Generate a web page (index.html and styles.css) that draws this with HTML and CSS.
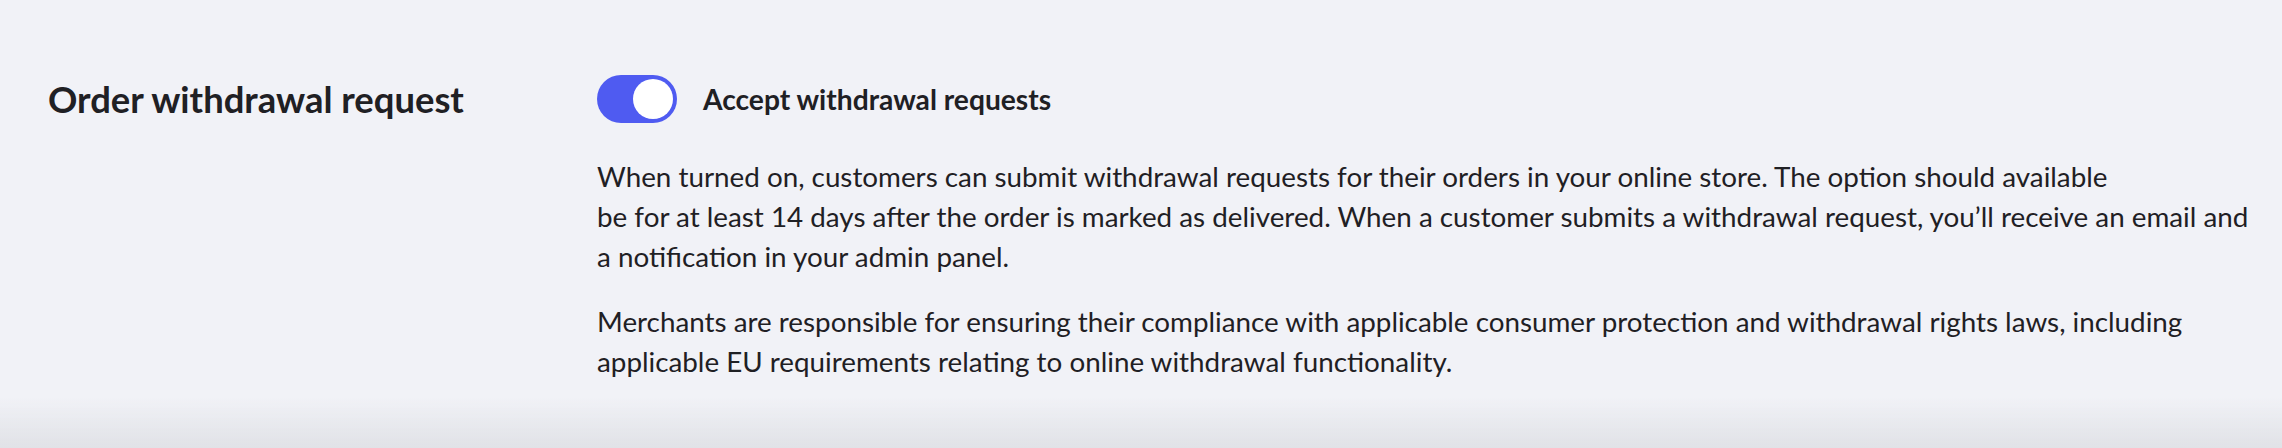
FILE: index.html
```html
<!DOCTYPE html>
<html lang="en">
<head>
    <meta charset="UTF-8">
    <meta name="viewport" content="width=device-width, initial-scale=1.0">
    <title>Order withdrawal request</title>
    <link rel="stylesheet" href="styles.css">
</head>
<body>
    <section class="setting">
        <h2 class="setting-title">Order withdrawal request</h2>
        <div class="setting-body">
            <label class="switch-row">
                <span class="switch is-on"><span class="switch-knob"></span></span>
                <span class="switch-label">Accept withdrawal requests</span>
            </label>
            <p>When turned on, customers can submit withdrawal requests for their orders in your online store. The option should available<br>be for at least 14 days after the order is marked as delivered. When a customer submits a withdrawal request, you’ll receive an email and a notification in your admin panel.</p>
            <p>Merchants are responsible for ensuring their compliance with applicable consumer protection and withdrawal rights laws, including applicable EU requirements relating to online withdrawal functionality.</p>
        </div>
    </section>
    <div class="page-fade"></div>
</body>
</html>
```

FILE: styles.css
```css
html, body {
    height: 100%;
}
body {
    margin: 0;
    font-family: Lato, "Open Sans", sans-serif;
    color: #1f2024;
    background-color: #f1f2f7;
    overflow: hidden;
}
.setting {
    display: grid;
    grid-template-columns: 549px 1fr;
    padding: 75px 30px 0 48px;
}
.setting-title {
    margin: 0;
    font-size: 36.4px;
    line-height: 48px;
    font-weight: 700;
}
.switch-row {
    display: flex;
    align-items: center;
    gap: 26px;
    cursor: pointer;
}
.switch {
    display: flex;
    align-items: center;
    width: 80px;
    height: 48px;
    padding: 4px;
    box-sizing: border-box;
    border-radius: 24px;
    background-color: #4f5bf1;
}
.switch.is-on {
    justify-content: flex-end;
}
.switch-knob {
    width: 40px;
    height: 40px;
    border-radius: 50%;
    background-color: #fff;
}
.switch-label {
    font-size: 28.2px;
    font-weight: 700;
}
.setting-body p {
    margin: 0;
    font-size: 27.8px;
    line-height: 40px;
}
.setting-body p:first-of-type {
    margin-top: 34px;
}
.setting-body p + p {
    margin-top: 25px;
}
.page-fade {
    position: fixed;
    left: 0;
    right: 0;
    bottom: 0;
    height: 50px;
    background: linear-gradient(to bottom, rgba(225, 226, 232, 0), #e0e1e6);
}
```
